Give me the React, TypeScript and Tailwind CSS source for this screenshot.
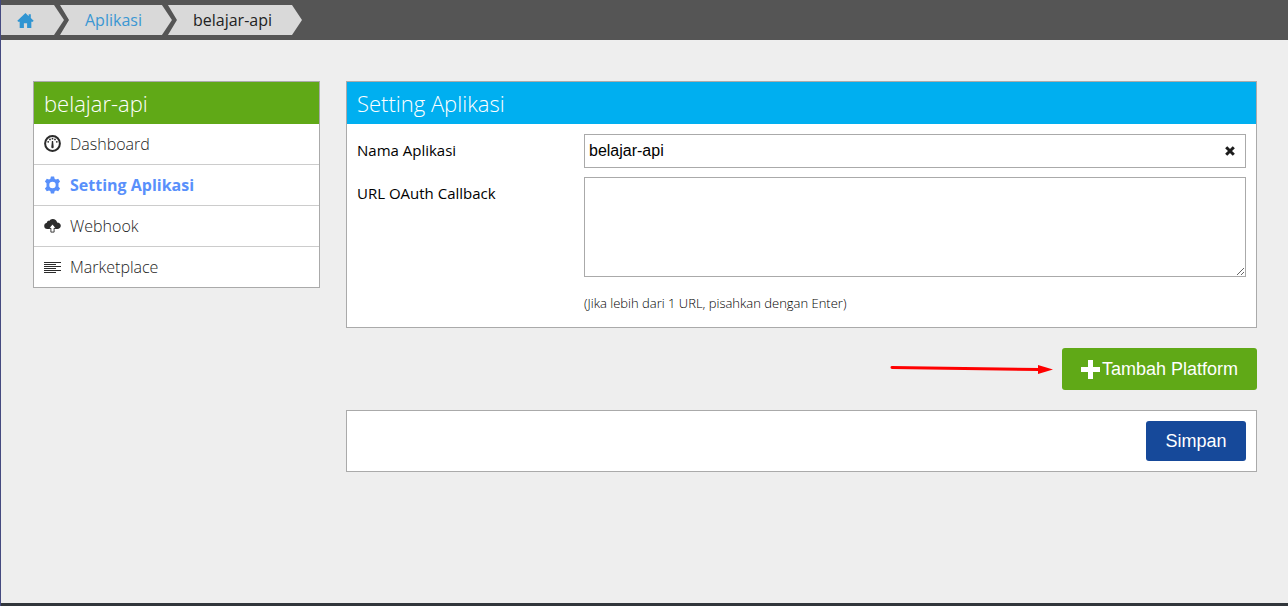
import { useState } from "react";
import type { ReactNode } from "react";

const GaugeIcon = () => (
  <svg viewBox="0 0 18 18" className="size-[18px] text-[#2b2b2b]" fill="none" aria-hidden="true">
    <circle cx="8.5" cy="8.5" r="7.4" stroke="currentColor" strokeWidth="2" />
    <path d="M7.900 6h1.200l.6 6a1.200 1.200 0 0 1-2.400 0z" fill="currentColor" />
    <g fill="currentColor">
      <circle cx="4.2" cy="6.800" r=".9" />
      <circle cx="6" cy="4.400" r=".9" />
      <circle cx="8.500" cy="3.700" r=".9" />
      <circle cx="11" cy="4.400" r=".9" />
      <circle cx="12.800" cy="6.800" r=".9" />
    </g>
  </svg>
);

const GearIcon = () => (
  <svg viewBox="0 0 18 18" className="size-[18px]" aria-hidden="true">
    <path
      fill="currentColor"
      fillRule="evenodd"
      d="M6.900.6h3.200l.5 2.200 1.300.8 2.300-.9 1.900 2.900-1.600 1.700v3.400l1.600 1.700-1.900 2.900-2.300-.9-1.300.8-.5 2.200H6.900l-.5-2.200-1.300-.8-2.300.9L.9 12.400l1.600-1.700V7.300L.9 5.600l1.900-2.900 2.300.9 1.300-.8zM8.500 5.800a3.200 3.200 0 1 0 0 6.400 3.200 3.200 0 0 0 0-6.400z"
    />
  </svg>
);

const CloudUploadIcon = () => (
  <svg viewBox="0 0 18 18" className="size-[18px] text-[#2b2b2b]" aria-hidden="true">
    <path
      fill="currentColor"
      d="M3.300 12A3.200 3.200 0 0 1 .2 8.900C.2 7.400 1.300 6.100 2.800 5.800 3.100 4.300 4.200 3.700 5.200 3.900 6 2.600 7.200 1.900 8.700 1.900c2.300 0 4 1.500 4.400 3.500 2.200.1 3.700 1.500 3.700 3.300 0 1.900-1.500 3.300-3.400 3.300z"
    />
    <path
      fill="#fff"
      stroke="currentColor"
      strokeWidth=".9"
      d="M8.500 7l3.600 4.200h-2v3.900H6.900v-3.900h-2z"
    />
  </svg>
);

const LinesIcon = () => (
  <svg viewBox="0 0 18 18" className="size-[18px] text-[#2b2b2b]" aria-hidden="true">
    <path
      stroke="currentColor"
      d="M0 4.500h17M0 6.500h12M0 8.500h17M0 10.500h12M0 12.500h17M0 14.500h12"
    />
  </svg>
);

const HomeIcon = () => (
  <svg viewBox="0 0 16 16" className="size-[17px]" aria-hidden="true">
    <path
      fill="currentColor"
      d="M8 1 .3 8.300l.8.8h1.400V15h4v-4.500h3V15h4V9.100h1.400l.8-.8-2.700-2.600V2h-2v1.900z"
    />
  </svg>
);

type NavItem = { label: string; icon: ReactNode; active?: boolean };

const navItems: NavItem[] = [
  { label: "Dashboard", icon: <GaugeIcon /> },
  { label: "Setting Aplikasi", icon: <GearIcon />, active: true },
  { label: "Webhook", icon: <CloudUploadIcon /> },
  { label: "Marketplace", icon: <LinesIcon /> },
];

function Breadcrumb() {
  return (
    <nav aria-label="Breadcrumb" className="bg-[#555555] py-[5px]">
      <ol className="flex h-[30px] text-base">
        <li className="flex w-[63px] [clip-path:polygon(0_0,53px_0,100%_50%,53px_100%,0_100%)]">
          <a href="#" aria-label="Beranda" className="flex w-full items-center bg-[#d9d9d9] pl-4 text-[#3095d2]">
            <HomeIcon />
          </a>
        </li>
        <li className="-ml-1 flex [clip-path:polygon(0_0,calc(100%_-_10px)_0,100%_50%,calc(100%_-_10px)_100%,0_100%,9px_50%)]">
          <a href="#" className="flex items-center bg-[#d9d9d9] pr-[30px] pl-[25px] text-[#3b97d3]">
            Aplikasi
          </a>
        </li>
        <li
          aria-current="page"
          className="-ml-1 flex items-center bg-[#d9d9d9] pr-[30px] pl-[25px] text-[#222222] [clip-path:polygon(0_0,calc(100%_-_10px)_0,100%_50%,calc(100%_-_10px)_100%,0_100%,9px_50%)]"
        >
          belajar-api
        </li>
      </ol>
    </nav>
  );
}

export default function App() {
  const [name, setName] = useState("belajar-api");
  const [urls, setUrls] = useState("");

  return (
    <div className="flex min-h-screen flex-col border-l border-[#454a80] bg-[#eeeeee] font-['Open_Sans','Noto_Sans',sans-serif] text-black">
      <Breadcrumb />
      <div className="flex flex-1 items-start gap-[26px] pt-[41px] pr-[31px] pb-8 pl-8">
        <aside className="w-[287px] shrink-0 border border-[#aaaaaa] bg-white">
          <h2 className="bg-[#60a917] px-2.5 text-[22px] leading-[42px] font-light text-white">belajar-api</h2>
          <ul className="divide-y divide-[#cccccc]">
            {navItems.map((item) => (
              <li key={item.label}>
                <a
                  href="#"
                  className={
                    item.active
                      ? "flex h-10 items-center gap-2 px-2.5 text-base font-bold text-[#5990fb]"
                      : "flex h-10 items-center gap-2 px-2.5 text-base font-[350] text-[#1d1d1d]"
                  }
                >
                  {item.icon}
                  {item.label}
                </a>
              </li>
            ))}
          </ul>
        </aside>

        <main className="min-w-0 flex-1">
          <section className="border border-[#aaaaaa] bg-white">
            <h1 className="bg-[#00aff0] px-2.5 text-[22px] leading-[42px] font-light text-white">Setting Aplikasi</h1>
            <div className="grid grid-cols-[227px_minmax(0,1fr)] gap-y-[9px] p-2.5 text-[15px]">
              <label htmlFor="app-name" className="leading-8">
                Nama Aplikasi
              </label>
              <div className="flex h-[34px] items-center border border-[#aaaaaa] bg-white">
                <input
                  id="app-name"
                  type="text"
                  value={name}
                  onChange={(e) => setName(e.target.value)}
                  className="h-full min-w-0 flex-1 px-1 font-['Liberation_Sans',Arial,sans-serif] text-base outline-none"
                />
                <button type="button" aria-label="Hapus" onClick={() => setName("")} className="flex size-[30px] items-center justify-center text-[#1d1d1d]">
                  <svg viewBox="0 0 10 10" className="size-2.5" aria-hidden="true">
                    <path d="M1.200 1.200l7.600 7.600M8.800 1.200l-7.600 7.600" stroke="currentColor" strokeWidth="3" />
                  </svg>
                </button>
              </div>
              <label htmlFor="callback" className="leading-8">
                URL OAuth Callback
              </label>
              <div>
                <textarea
                  id="callback"
                  value={urls}
                  onChange={(e) => setUrls(e.target.value)}
                  className="block h-[100px] w-full resize border border-[#aaaaaa] bg-white px-1 py-1 font-['Liberation_Sans',Arial,sans-serif] text-base outline-none"
                />
                <p className="mt-4 mb-1 text-[13px] leading-5 font-[350]">(Jika lebih dari 1 URL, pisahkan dengan Enter)</p>
              </div>
            </div>
          </section>

          <div className="my-5 flex items-center justify-end gap-2 font-['Liberation_Sans',Arial,sans-serif]">
            <svg viewBox="0 0 164 12" className="h-3 w-[164px]" aria-hidden="true">
              <path d="M2 4.500 149 6.500" stroke="#ff0000" strokeWidth="3" strokeLinecap="round" />
              <path d="M148 2 163 6.500 148 11z" fill="#ff0000" />
            </svg>
            <button type="button" className="flex h-[42px] items-center gap-0.5 rounded-[3px] bg-[#60a917] px-[19px] text-lg text-white">
              <svg viewBox="0 0 19 19" className="size-[19px]" aria-hidden="true">
                <path d="M9.500 0v19M0 9.500h19" stroke="currentColor" strokeWidth="5" />
              </svg>
              Tambah Platform
            </button>
          </div>

          <div className="flex justify-end border border-[#aaaaaa] bg-white p-2.5">
            <button type="button" className="h-10 min-w-[100px] rounded-[3px] bg-[#16499a] px-[19px] font-['Liberation_Sans',Arial,sans-serif] text-lg text-white">
              Simpan
            </button>
          </div>
        </main>
      </div>
      <div className="h-[3px] bg-[#31363b]" />
    </div>
  );
}
